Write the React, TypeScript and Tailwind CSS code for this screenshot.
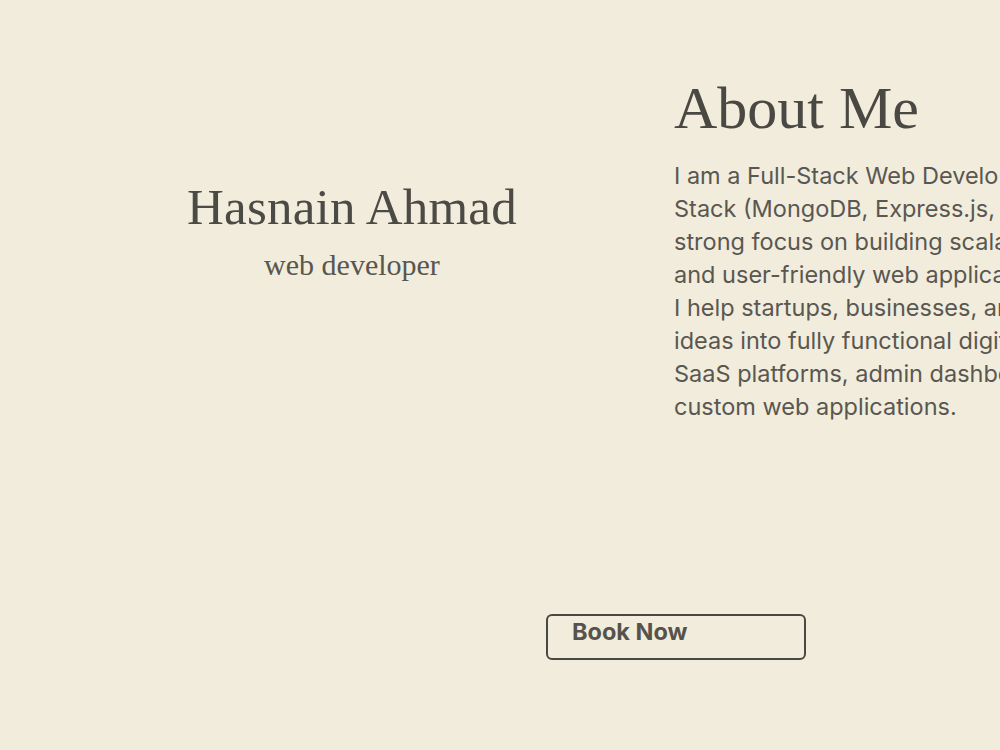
export default function App() {
  return (
    <main className="w-[1000px] h-[750px] overflow-hidden bg-[#f1ecdc] text-[#4a4843]">
      <section className="flex">
        {/* left: name */}
        <div className="w-[674px] shrink-0 pl-[30px] pt-[182px] flex flex-col items-center" style={{ fontFamily: '"Liberation Serif", "DejaVu Serif", serif' }}>
          <h1 className="text-[51px] leading-none tracking-[0.2px] text-[#4c4a44]">Hasnain Ahmad</h1>
          <h2 className="mt-[17px] text-[30px] leading-none text-[#58564f]">web developer</h2>
        </div>

        {/* right: about */}
        <div className="pt-[78px] shrink-0 w-[560px]">
          <h2 className="text-[60px] leading-none text-[#4a4843]" style={{ fontFamily: '"Liberation Serif", "DejaVu Serif", serif' }}>
            About Me
          </h2>
          <p className="mt-[21px] text-[23.5px] leading-[33px] whitespace-nowrap text-[#5a5751]" style={{ fontFamily: 'Inter, "Liberation Sans", sans-serif' }}>
            I am a Full-Stack Web Developer specializing in the MERN<br />
            Stack (MongoDB, Express.js, React.js, Node.js) with a<br />
            strong focus on building scalable, high-performance,<br />
            and user-friendly web applications.<br />
            I help startups, businesses, and individuals turn their<br />
            ideas into fully functional digital products, including<br />
            SaaS platforms, admin dashboards, e-commerce sites and<br />
            custom web applications.
          </p>
        </div>
      </section>

      <div className="mt-[191px] pl-[546px]">
        <button className="flex items-start w-[260px] h-[46px] rounded-[6px] border-2 border-[#4a4843] pl-[24px] pt-[2px] text-left text-[23.5px] leading-[28px] font-bold text-[#56534d]" style={{ fontFamily: 'Inter, "Liberation Sans", sans-serif' }}>
          Book Now
        </button>
      </div>
    </main>
  );
}
